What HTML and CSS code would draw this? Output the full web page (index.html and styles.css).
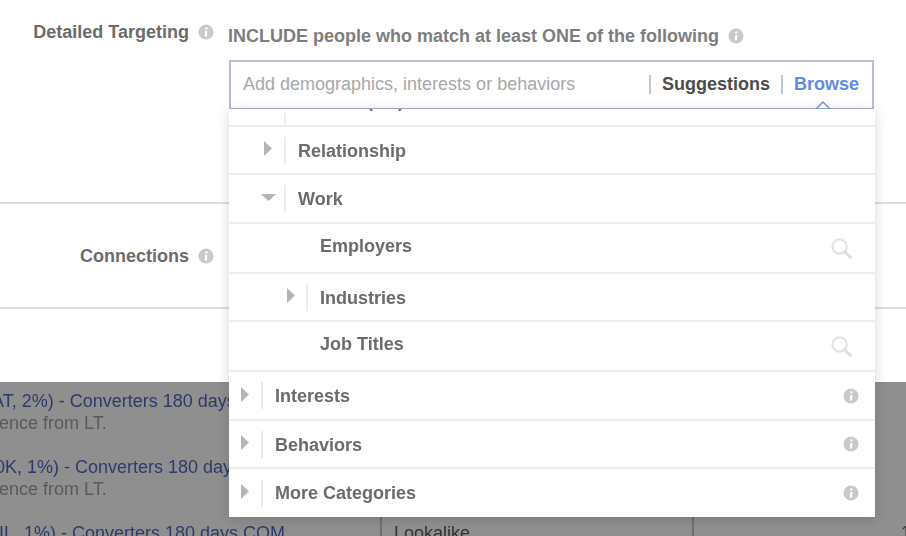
FILE: index.html
```html
<!DOCTYPE html>
<html lang="en">
<head>
  <meta charset="UTF-8" />
  <title>Detailed Targeting</title>
  <link rel="stylesheet" href="styles.css">
</head>
<body>

  <svg class="defs" width="0" height="0">
    <symbol id="info" viewBox="0 0 16 16">
      <circle cx="8" cy="8" r="7.5" fill="#c9c9c9"/>
      <circle cx="8.4" cy="4.4" r="1.2" fill="#fff"/>
      <path d="M7.2 7h2.2l-.5 5.5H6.8z" fill="#fff"/>
    </symbol>
    <symbol id="search" viewBox="0 0 22 22">
      <circle cx="9" cy="9" r="7.5" fill="none" stroke="#e4e4e4" stroke-width="2.4"/>
      <path d="M14.5 14.5l6 6" stroke="#dedede" stroke-width="3" stroke-linecap="round"/>
    </symbol>
    <symbol id="right" viewBox="0 0 8 15">
      <path d="M0 0l8 7.5L0 15z" fill="#b4b4b4"/>
    </symbol>
    <symbol id="down" viewBox="0 0 15 7">
      <path d="M0 0h15L7.5 7z" fill="#b4b4b4"/>
    </symbol>
  </svg>

  <div class="form">
    <section class="field targeting">
      <div class="field-label">
        <span>Detailed Targeting</span>
        <svg class="info"><use href="#info"/></svg>
      </div>
      <div class="field-body">
        <h4 class="include">
          INCLUDE people who match at least ONE of the following
          <svg class="info"><use href="#info"/></svg>
        </h4>
        <div class="search-box">
          <span class="placeholder">Add demographics, interests or behaviors</span>
          <span class="sep"></span>
          <span class="tab">Suggestions</span>
          <span class="sep"></span>
          <span class="tab active">Browse</span>
        </div>
      </div>
    </section>

    <section class="field connections">
      <div class="field-label">
        <span>Connections</span>
        <svg class="info"><use href="#info"/></svg>
      </div>
    </section>
  </div>

  <div class="behind">
    <div class="behind-row">
      <div class="cell">
        <a class="first">(AT, 2%) - Converters 180 days COM</a>
        <p>Lookalike audience from LT.</p>
      </div>
      <div class="cell"></div>
      <div class="cell"></div>
    </div>
    <div class="behind-row">
      <div class="cell">
        <a class="second">0K, 1%) - Converters 180 days COM</a>
        <p>Lookalike audience from LT.</p>
      </div>
      <div class="cell"></div>
      <div class="cell"></div>
    </div>
    <div class="behind-row">
      <div class="cell">
        <a class="third">IL, 1%) - Converters 180 days COM</a>
      </div>
      <div class="cell">Lookalike</div>
      <div class="cell">1</div>
    </div>
  </div>

  <!-- browse dropdown, sits over the form and the table -->
  <svg class="caret" width="16" height="10" viewBox="0 0 16 10">
    <path d="M1 9l7-7 7 7z" fill="#fff" stroke="#6d90e0" stroke-width="1.5"/>
    <path d="M0 10h16" stroke="#fff" stroke-width="2"/>
  </svg>

  <div class="menu">
    <div class="item level2 clipped">
      <span class="arrow"></span><span class="bar"></span><span class="name">Politics (US)</span>
    </div>
    <div class="item level2 low">
      <span class="arrow"><svg class="tri"><use href="#right"/></svg></span><span class="bar"></span><span class="name">Relationship</span>
    </div>
    <div class="item level2 low">
      <span class="arrow"><svg class="tri-down"><use href="#down"/></svg></span><span class="bar"></span><span class="name">Work</span>
    </div>
    <div class="item level3 high">
      <span class="arrow"></span><span class="bar none"></span><span class="name">Employers</span>
      <svg class="search"><use href="#search"/></svg>
    </div>
    <div class="item level3 low">
      <span class="arrow"><svg class="tri"><use href="#right"/></svg></span><span class="bar"></span><span class="name">Industries</span>
    </div>
    <div class="item level3 high">
      <span class="arrow"></span><span class="bar none"></span><span class="name">Job Titles</span>
      <svg class="search"><use href="#search"/></svg>
    </div>
    <div class="item level1 low">
      <span class="arrow"><svg class="tri"><use href="#right"/></svg></span><span class="bar"></span><span class="name">Interests</span>
      <svg class="info end"><use href="#info"/></svg>
    </div>
    <div class="item level1 low">
      <span class="arrow"><svg class="tri"><use href="#right"/></svg></span><span class="bar"></span><span class="name">Behaviors</span>
      <svg class="info end"><use href="#info"/></svg>
    </div>
    <div class="item level1">
      <span class="arrow"><svg class="tri"><use href="#right"/></svg></span><span class="bar"></span><span class="name">More Categories</span>
      <svg class="info end"><use href="#info"/></svg>
    </div>
  </div>

</body>
</html>
```

FILE: styles.css
```css
html, body {
  height: 100%;
}
body {
  margin: 0;
  overflow: hidden;
  position: relative;
  background: #8f8f8f;
  font-family: "Liberation Sans", Arial, sans-serif;
  font-size: 18px;
  filter: blur(0.4px);
}
.defs {
  position: absolute;
}

/* top form */
.form {
  height: 382px;
  background: #fff;
}
.field {
  display: flex;
  box-sizing: border-box;
}
.targeting {
  height: 204px;
  border-bottom: 2px solid #dedede;
}
.connections {
  height: 105px;
  border-bottom: 2px solid #dedede;
}
.field-label {
  width: 229px;
  flex: none;
  box-sizing: border-box;
  display: flex;
  justify-content: flex-end;
  align-items: center;
  gap: 9px;
  height: 22px;
  padding-right: 15px;
  margin-top: 21px;
  font-weight: bold;
  color: #6b6b6b;
}
.connections .field-label {
  margin-top: 41px;
}
.info {
  width: 16px;
  height: 16px;
  flex: none;
}
.field-body {
  width: 645px;
}
.include {
  margin: 26px 0 0 -1px;
  height: 20px;
  display: flex;
  align-items: center;
  gap: 9px;
  font-size: 18px;
  line-height: 20px;
  color: #7d7d7d;
  white-space: nowrap;
}
.search-box {
  box-sizing: border-box;
  height: 50px;
  margin-top: 14px;
  padding: 0 13px 2px 12px;
  display: flex;
  align-items: center;
  border: 2px solid #b9bdd2;
  border-bottom-color: #a9adc2;
  background: #fff;
}
.placeholder {
  flex: 1;
  color: #a8a8a8;
}
.sep {
  width: 2px;
  height: 19px;
  background: #c3c6d6;
}
.tab {
  margin-left: 11px;
  margin-right: 11px;
  font-weight: bold;
  color: #4b4b4b;
}
.tab.active {
  margin-right: 0;
  color: #5f8ae6;
}

/* dimmed table behind the menu */
.behind {
  height: 154px;
  overflow: hidden;
  color: #333;
}
.behind-row {
  display: grid;
  grid-template-columns: 382px 312px 1fr;
  height: 66px;
  white-space: nowrap;
}
.cell {
  box-sizing: border-box;
  padding: 8px 0 0 12px;
  line-height: 22px;
  overflow: hidden;
  border-right: 2px solid #6f6f6f;
}
.cell:first-child {
  padding-left: 0;
}
.cell:last-child {
  padding-left: 207px;
  border-right: 0;
}
.cell a {
  display: block;
  color: #2f3a68;
}
.cell a.first {
  margin-left: -14px;
}
.cell a.second {
  margin-left: -5px;
}
.cell a.third {
  margin-left: -1px;
}
.cell p {
  margin: 0 0 0 -116px;
  color: #5a5a5a;
}

/* browse menu */
.menu {
  position: absolute;
  left: 229px;
  top: 109px;
  width: 646px;
  height: 408px;
  display: grid;
  grid-template-rows: 18px 48px 49px 50px 48px 50px 49px 48px 48px;
  background: #fff;
  box-shadow: 0 2px 12px rgba(0, 0, 0, 0.16);
}
.caret {
  position: absolute;
  left: 815px;
  top: 100px;
  z-index: 2;
}
.item {
  box-sizing: border-box;
  display: flex;
  align-items: center;
  padding-right: 16px;
  border-bottom: 2px solid #ececec;
  font-weight: bold;
  color: #6b6b6b;
  min-height: 0;
  overflow: hidden;
}
.item:last-child {
  border-bottom: 0;
}
.level1 {
  padding-left: 12px;
}
.level2 {
  padding-left: 35px;
}
.level3 {
  padding-left: 58px;
}
.level3 .arrow {
  width: 19px;
}
.low .name {
  margin-top: 2px;
}
.high .name {
  margin-bottom: 4px;
}
.clipped {
  align-items: flex-end;
}
.clipped .name {
  margin-bottom: 13px;
  flex: none;
}
.clipped .bar {
  margin-bottom: 0;
  height: 12px;
}
.arrow {
  width: 20px;
  flex: none;
  display: flex;
  align-items: center;
  margin-top: -3px;
}
.tri {
  width: 8px;
  height: 15px;
}
.tri-down {
  width: 15px;
  height: 7px;
  margin-left: -3px;
}
.bar {
  width: 2px;
  height: 27px;
  flex: none;
  background: #ececec;
}
.bar.none {
  background: none;
}
.name {
  margin-left: 12px;
}
.end {
  margin-left: auto;
}
.search {
  width: 21px;
  height: 21px;
  margin-top: 1px;
  margin-left: auto;
  margin-right: 7px;
}
```
